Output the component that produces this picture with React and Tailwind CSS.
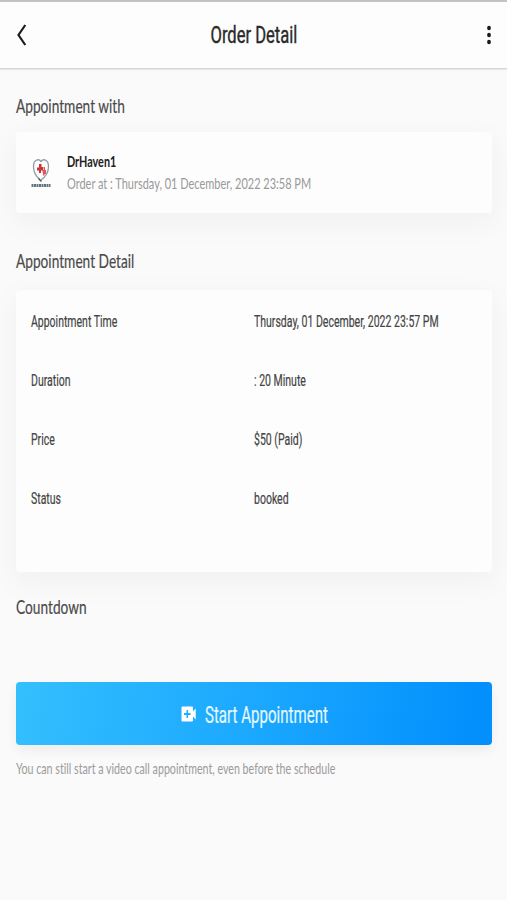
import React from "react";

const details = [
  { label: "Appointment Time", value: "Thursday, 01 December, 2022 23:57 PM" },
  { label: "Duration", value: ": 20 Minute" },
  { label: "Price", value: "$50 (Paid)" },
  { label: "Status", value: "booked" },
];

const SectionTitle = ({ children }) => (
  <h2 className="w-fit origin-left scale-x-[0.685] whitespace-nowrap font-['Lato',sans-serif] text-[20px] leading-6 text-[#4a4a4a] [-webkit-text-stroke:0.2px]">
    {children}
  </h2>
);

const Logo = () => (
  <svg width="20" height="32" viewBox="0 0 20 32" fill="none">
    <path
      d="M8.500 22C4.500 19 2.500 14 2.500 9.500C2.500 3 7.500 1 10 4.500C12.500 1 17.500 3 17.500 9.500C17.500 15 14.500 20 10 23"
      stroke="#8d9da5"
      strokeWidth="1.300"
    />
    <path d="M7.500 21.500L10.500 24.500" stroke="#42606b" strokeWidth="1.500" />
    <path d="M8 7H10.500V10H12V13.500H10V16H8V13.500H6V10.500H8Z" fill="#c93537" />
    <path d="M12.500 10H14V13H15V17H13.500V18.500H12V15.500H11.500V13H12.500Z" fill="#d9585a" />
    <path d="M0.500 28.500H19.500" stroke="#5b7681" strokeWidth="2.800" strokeDasharray="2 0.500" />
  </svg>
);

const Header = () => (
  <header className="flex h-[69px] items-center justify-between border-t-2 border-b border-t-[#c3c3c3] border-b-[#d6d6d6] bg-[#fdfdfd] pr-[15px] pl-4 shadow-[0_1px_1px_#e8e8e8]">
    <button type="button" aria-label="Back">
      <svg width="11" height="24" viewBox="0 0 11 24" fill="none">
        <path d="M9.300 2L2.500 12L9.300 22" stroke="#1c1c1c" strokeWidth="2.200" />
      </svg>
    </button>
    <div className="mr-[6px] flex w-[87px] justify-center">
      <h1 className="scale-x-[0.69] whitespace-nowrap font-['Roboto',sans-serif] text-[24px] leading-7 text-[#2a2a2a] [-webkit-text-stroke:0.4px]">
        Order Detail
      </h1>
    </div>
    <button type="button" aria-label="More">
      <svg width="6" height="22" viewBox="0 0 6 22" fill="#1a1a1a">
        <ellipse cx="3" cy="4" rx="1.900" ry="2.300" />
        <ellipse cx="3" cy="11" rx="1.900" ry="2.300" />
        <ellipse cx="3" cy="18" rx="1.900" ry="2.300" />
      </svg>
    </button>
  </header>
);

const App = () => {
  return (
    <div className="h-[900px] w-[507px] overflow-hidden bg-[#fafafa] [font-variant-ligatures:none]">
      <Header />

      <main className="pt-6 pr-[15px] pl-4">
        <SectionTitle>Appointment with</SectionTitle>
        <section className="mt-[15px] flex h-[81px] items-center rounded-[4px] bg-[#fdfdfd] pl-[15px] shadow-[0_9px_28px_4px_rgba(0,0,0,0.035)]">
          <Logo />
          <div className="-mt-px ml-4 font-['Lato',sans-serif] text-[16px] whitespace-nowrap">
            <p className="w-fit origin-left scale-x-[0.675] leading-[22px] font-bold text-[#222]">
              DrHaven1
            </p>
            <p className="w-fit origin-left scale-x-[0.686] leading-[22px] text-[#999]">
              Order at : Thursday, 01 December, 2022 23:58 PM
            </p>
          </div>
        </section>

        <div className="mt-[35px]">
          <SectionTitle>Appointment Detail</SectionTitle>
        </div>
        <section className="mt-[18px] h-[282px] rounded-[4px] bg-[#fdfdfd] pt-[2px] pl-[15px] shadow-[0_9px_28px_4px_rgba(0,0,0,0.035)]">
          {details.map((item) => (
            <div
              key={item.label}
              className="flex h-[59.2px] items-center font-['Roboto',sans-serif] text-[16px] whitespace-nowrap text-[#444] [-webkit-text-stroke:0.2px]"
            >
              <div className="w-[223px] shrink-0">
                <p className="w-fit origin-left scale-x-[0.655]">{item.label}</p>
              </div>
              <p className="w-fit shrink-0 origin-left scale-x-[0.657]">{item.value}</p>
            </div>
          ))}
        </section>

        <div className="relative mt-[22px]">
          <SectionTitle>Countdown</SectionTitle>
        </div>

        <button
          type="button"
          className="mt-16 flex h-[63px] w-full items-center rounded-[4px] bg-linear-[100deg,#34bffe_0%,#1ba8fe_50%,#0390fd_95%] pl-[165px] shadow-[0_5px_12px_rgba(0,0,0,0.06)]"
        >
          <svg width="15" height="16" viewBox="0 0 15 16" fill="white">
            <path
              fillRule="evenodd"
              d="M1.500 0.500H11Q12 0.500 12 1.500V5.500L14.700 2.500V13.500L12 10.500V14.500Q12 15.500 11 15.500H1.500Q0.500 15.500 0.500 14.500V1.500Q0.500 0.500 1.500 0.500ZM5.500 4V7H3V9H5.500V12H7V9H9.500V7H7V4Z"
            />
          </svg>
          <span className="mt-1 ml-[9px] origin-left scale-x-[0.655] whitespace-nowrap font-['Roboto',sans-serif] text-[23px] leading-7 text-[#e4f7ff] [-webkit-text-stroke:0.2px]">
            Start Appointment
          </span>
        </button>
        <p className="mt-3 w-fit origin-left scale-x-[0.711] whitespace-nowrap font-['Lato',sans-serif] text-[15px] leading-[22px] text-[#9b9b9b]">
          You can still start a video call appointment, even before the schedule
        </p>
      </main>
    </div>
  );
};

export default App;
